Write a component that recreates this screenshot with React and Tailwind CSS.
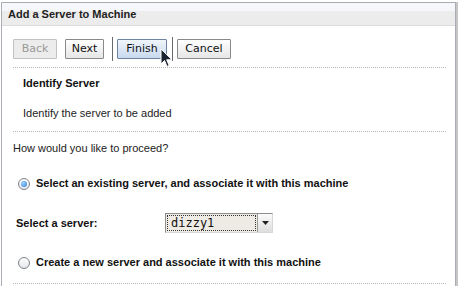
import React from 'react';

const sans = { fontFamily: '"Liberation Sans", Arial, sans-serif' };

const Radio = ({ checked }) => (
    <span className="w-[12px] h-[12px] rounded-full border border-[#7d8189] bg-[linear-gradient(#ffffff,#e4e6ea)] flex items-center justify-center shrink-0">
        {checked && <span className="w-[6px] h-[6px] rounded-full bg-[radial-gradient(circle_at_35%_35%,#9fd0ff,#2f7fd6)]" />}
    </span>
);

const Dotted = ({ className = '' }) => (
    <div className={`ml-[11px] mr-[9px] border-t border-dotted border-[#b8b8b8] ${className}`} />
);

const App = () => {
    const btn = 'h-[20px] flex items-center justify-center text-[11px] border rounded-[1px] font-["DejaVu_Sans",sans-serif]';

    return (
        <div className="w-[459px] h-[286px] overflow-hidden bg-white relative" style={sans}>
            <div className="ml-[1px] mt-[2px] w-[455px] h-[290px] border border-b-0 border-[#a9adb3] shadow-[2px_0_0_#c6c6c6]">
                {/* Header */}
                <div className="h-[23px] border-b border-[#dcdcdc] bg-[linear-gradient(#f6f7fb_0,#f6f7fb_38%,#ececec_38%)] flex items-center pl-[6px]">
                    <span className="text-[11px] font-bold text-[#222]">Add a Server to Machine</span>
                </div>

                {/* Toolbar */}
                <div className="pt-[11px] pl-[11px] flex items-center">
                    <div className={`${btn} w-[44px] border-[#c2c2c2] bg-[#ececec] text-[#999]`}>Back</div>
                    <div className={`${btn} w-[39px] ml-[8px] border-[#8a8a8a] bg-[linear-gradient(#ffffff,#e6e6e6)] text-[#111]`}>Next</div>
                    <div className="w-px h-[24px] ml-[8px] bg-[#6a6a6a]" />
                    <div className={`${btn} w-[50px] ml-[4px] border-[#6f84a3] bg-[linear-gradient(#f0f5fc,#c8d9ef)] text-[#111]`}>Finish</div>
                    <div className="w-px h-[24px] ml-[5px] bg-[#6a6a6a]" />
                    <div className={`${btn} w-[54px] ml-[4px] border-[#8a8a8a] bg-[linear-gradient(#ffffff,#e6e6e6)] text-[#111]`}>Cancel</div>
                </div>

                <Dotted className="mt-[6px]" />

                <div className="mt-[9px] pl-[21px] text-[11px] leading-[13px] font-bold text-[#111]">Identify Server</div>
                <div className="mt-[17px] pl-[21px] text-[11px] leading-[13px] text-[#222]">Identify the server to be added</div>

                <Dotted className="mt-[11px]" />

                <div className="mt-[10px] pl-[11px] text-[11px] leading-[13px] text-[#222]">How would you like to proceed?</div>

                <div className="mt-[22px] ml-[16px] h-[13px] flex items-center gap-[6px]">
                    <Radio checked />
                    <span className="text-[11px] font-bold text-[#111]">Select an existing server, and associate it with this machine</span>
                </div>

                <div className="mt-[23px] ml-[14px] h-[20px] flex items-center">
                    <span className="w-[149px] text-[11px] font-bold text-[#111]">Select a server:</span>
                    <div className="w-[108px] h-[20px] border border-[#8e8e8e] border-b-[#d8d8d8] border-r-[#d8d8d8] bg-[#eeebe5] flex">
                        <div className="flex-1 m-[1px] border border-dotted border-[#333] flex items-center pl-[3px] text-[12px] text-[#111] font-['DejaVu_Sans_Mono',monospace]">
                            dizzy1
                        </div>
                        <div className="w-[15px] border-l border-[#9a9a9a] bg-[linear-gradient(#fbfbfb,#dedede)] flex items-center justify-center">
                            <svg width="7" height="4" viewBox="0 0 7 4"><path d="M0 0h7L3.5 4z" fill="#222" /></svg>
                        </div>
                    </div>
                </div>

                <div className="mt-[23px] ml-[16px] h-[13px] flex items-center gap-[6px]">
                    <Radio />
                    <span className="text-[11px] font-bold text-[#111]">Create a new server and associate it with this machine</span>
                </div>

                <Dotted className="mt-[14px]" />
            </div>

            {/* Mouse pointer */}
            <svg className="absolute left-[160px] top-[48px]" width="13" height="20" viewBox="0 0 13 20">
                <path d="M1 1v15l3.5-3.5 2.5 6 2.2-1-2.5-5.7H12z" fill="#1c2433" stroke="#fff" strokeWidth="1" strokeLinejoin="round" />
            </svg>
        </div>
    );
};

export default App;
